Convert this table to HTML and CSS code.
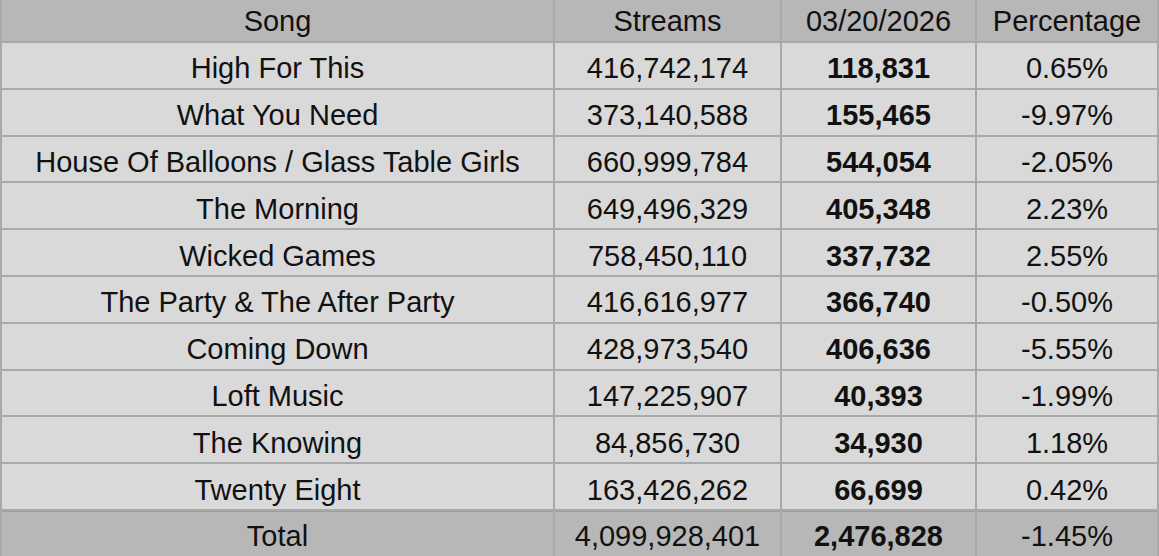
FILE: index.html
```html
<!DOCTYPE html>
<html>
<head>
<meta charset="utf-8">
<link rel="stylesheet" href="styles.css">
</head>
<body>
<div class="table">
  <div class="cell head">Song</div>
  <div class="cell head">Streams</div>
  <div class="cell head">03/20/2026</div>
  <div class="cell head">Percentage</div>

  <div class="cell">High For This</div><div class="cell">416,742,174</div><div class="cell b">118,831</div><div class="cell">0.65%</div>
  <div class="cell">What You Need</div><div class="cell">373,140,588</div><div class="cell b">155,465</div><div class="cell">-9.97%</div>
  <div class="cell">House Of Balloons / Glass Table Girls</div><div class="cell">660,999,784</div><div class="cell b">544,054</div><div class="cell">-2.05%</div>
  <div class="cell">The Morning</div><div class="cell">649,496,329</div><div class="cell b">405,348</div><div class="cell">2.23%</div>
  <div class="cell">Wicked Games</div><div class="cell">758,450,110</div><div class="cell b">337,732</div><div class="cell">2.55%</div>
  <div class="cell">The Party &amp; The After Party</div><div class="cell">416,616,977</div><div class="cell b">366,740</div><div class="cell">-0.50%</div>
  <div class="cell">Coming Down</div><div class="cell">428,973,540</div><div class="cell b">406,636</div><div class="cell">-5.55%</div>
  <div class="cell">Loft Music</div><div class="cell">147,225,907</div><div class="cell b">40,393</div><div class="cell">-1.99%</div>
  <div class="cell">The Knowing</div><div class="cell">84,856,730</div><div class="cell b">34,930</div><div class="cell">1.18%</div>
  <div class="cell">Twenty Eight</div><div class="cell">163,426,262</div><div class="cell b">66,699</div><div class="cell">0.42%</div>

  <div class="cell total">Total</div><div class="cell total">4,099,928,401</div><div class="cell total b">2,476,828</div><div class="cell total">-1.45%</div>
</div>
</body>
</html>
```
FILE: styles.css
```css
html, body {
  margin: 0;
  padding: 0;
  background: #d9d9d9;
}
.table {
  width: 1159px;
  height: 556px;
  box-sizing: border-box;
  padding: 0 2px;
  display: grid;
  grid-template-columns: 551px 225px 193px 180px;
  grid-template-rows: 41px repeat(10, 44.8px) 45px;
  gap: 2px;
  background: #a9a9a9;
  font-family: "Liberation Sans", Arial, sans-serif;
  font-size: 29px;
  color: #111;
}
.cell {
  background: #d9d9d9;
  display: flex;
  align-items: center;
  justify-content: center;
  padding-top: 7px;
  box-sizing: border-box;
  white-space: nowrap;
}
.head {
  background: #b7b7b7;
  padding-top: 1px;
}
.total {
  background: #b7b7b7;
  box-shadow: inset 0 1px 0 #9e9e9e;
}
.b {
  font-weight: bold;
}
```
